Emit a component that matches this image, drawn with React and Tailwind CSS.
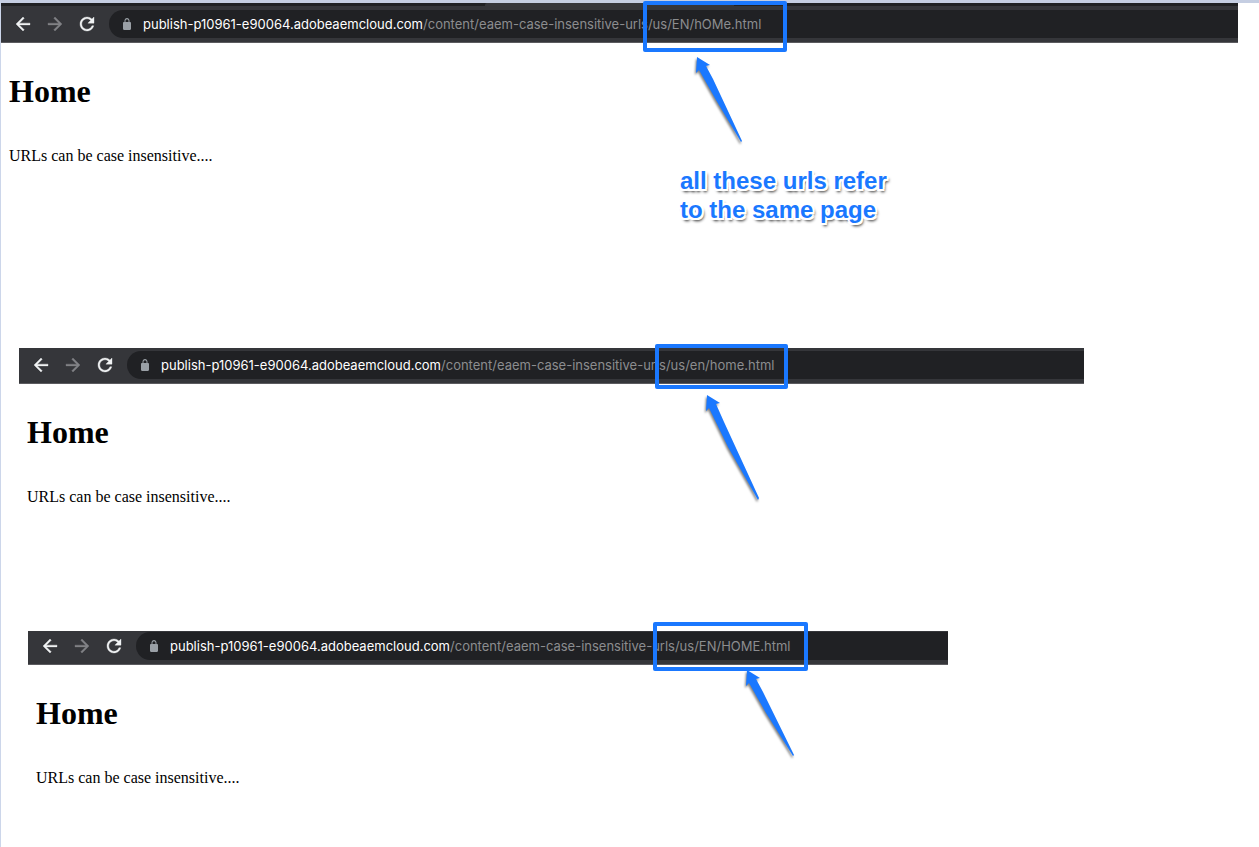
const ARROW_PATH =
  'M20 11H7.83l5.59-5.59L12 4l-8 8 8 8 1.41-1.41L7.83 13H20v-2z';
const RELOAD_PATH =
  'M17.65 6.35C16.2 4.9 14.21 4 12 4c-4.42 0-7.99 3.58-7.99 8s3.57 8 7.99 8c3.73 0 6.84-2.55 7.73-6h-2.08c-.82 2.33-3.04 4-5.65 4-3.31 0-6-2.69-6-6s2.69-6 6-6c1.66 0 3.14.69 4.22 1.78L13 11h7V4l-2.35 2.35z';
const LOCK_PATH =
  'M18 8h-1V6c0-2.76-2.24-5-5-5S7 3.24 7 6v2H6c-1.1 0-2 .9-2 2v10c0 1.1.9 2 2 2h12c1.1 0 2-.9 2-2V10c0-1.1-.9-2-2-2zM9 6c0-1.66 1.34-3 3-3s3 1.34 3 3v2H9V6z';

function NavButton({ label, path, className }) {
  return (
    <button type="button" aria-label={label} className={className}>
      <svg
        viewBox="4 4 16 16"
        className="size-[14px] overflow-visible fill-current stroke-current stroke-[0.4]"
        aria-hidden="true"
      >
        <path d={path} />
      </svg>
    </button>
  );
}

function AddressBar({ id, path, className }) {
  return (
    <div
      className={`flex items-start border-b border-[#5b5b5f] bg-[#35363a] pl-[15px] ${className}`}
    >
      <nav className="flex h-7 items-center gap-[18px] pr-[15px]">
        <NavButton label="Back" path={ARROW_PATH} className="text-[#f1f3f4]" />
        <NavButton label="Forward" path={ARROW_PATH} className="rotate-180 text-[#818286]" />
        <NavButton label="Reload" path={RELOAD_PATH} className="text-[#f1f3f4]" />
      </nav>
      <label
        htmlFor={id}
        className="flex h-7 min-w-0 flex-1 items-center rounded-l-full bg-[#202124] pl-[14px] font-['Inter',sans-serif] text-[13px] leading-5"
      >
        <svg
          viewBox="4 1 16 21"
          className="mr-3 h-3 w-2 shrink-0 fill-[#9aa0a6]"
          preserveAspectRatio="none"
          aria-hidden="true"
        >
          <path d={LOCK_PATH} />
        </svg>
        <span className="text-white">publish-p10961-e90064.adobeaemcloud.com</span>
        <input
          id={id}
          type="text"
          defaultValue={path}
          spellCheck={false}
          className="min-w-0 flex-1 bg-transparent text-[#8c8d8f] outline-none"
        />
      </label>
    </div>
  );
}

function PageContent() {
  return (
    <div className="px-2 pt-[30px] font-['Liberation_Serif',serif] text-black">
      <h1 className="text-[32px] leading-[37px] font-bold">Home</h1>
      <p className="mt-[37px] text-base leading-[18px]">URLs can be case insensitive....</p>
    </div>
  );
}

function Highlight({ className }) {
  return (
    <div
      className={`pointer-events-none absolute rounded-[2px] border-4 border-[#1a78ff] ${className}`}
    />
  );
}

function Pointer({ points, className }) {
  return (
    <svg
      className={`pointer-events-none absolute overflow-visible fill-[#1a78ff] drop-shadow-[-1px_2px_1px_rgba(0,0,0,0.5)] ${className}`}
      aria-hidden="true"
    >
      <polygon points={points} />
    </svg>
  );
}

export default function App() {
  return (
    <main className="min-h-screen border-t-[3px] border-l border-t-[#c5cee2] border-l-[#ccd6ea] bg-white">
      <section className="relative mr-[21px] h-[345px]">
        <div className="flex h-[3px] bg-[#202124]">
          <div className="ml-[484px] w-[249px] rounded-t-[2px] bg-[#35363a]" />
        </div>
        <AddressBar
          id="url-mixed"
          path="/content/eaem-case-insensitive-urls/us/EN/hOMe.html"
          className="pt-1 pb-1"
        />
        <PageContent />
        <Highlight className="-top-[2px] left-[642px] h-[51px] w-36" />
        <Pointer
          className="top-[54px] left-[695px] h-[86px] w-[47px]"
          points="1,0 14,8 10,9 17,22 46,84 45,85 20,43 3,13 0,16"
        />
        <p className="absolute top-[163px] left-[679px] font-['Liberation_Sans',sans-serif] text-2xl leading-[29px] font-bold whitespace-nowrap text-[#1a78ff] [text-shadow:-2px_0_0_#fff,2px_0_0_#fff,0_-2px_0_#fff,0_2px_0_#fff,-2px_-2px_0_#fff,2px_-2px_0_#fff,-2px_2px_0_#fff,2px_2px_0_#fff,2px_3px_3px_rgba(0,0,0,0.9)]">
          all these urls refer
          <br />
          to the same page
        </p>
      </section>

      <section className="relative mr-[175px] ml-[18px] h-[283px]">
        <AddressBar
          id="url-lower"
          path="/content/eaem-case-insensitive-urls/us/en/home.html"
          className="pt-[3px] pb-1"
        />
        <PageContent />
        <Highlight className="-top-1 left-[636px] h-[45px] w-[133px]" />
        <Pointer
          className="top-[47px] left-[687px] h-[105px] w-[54px]"
          points="1,0 14,8 10,9 18,27 53,103 52,105 22,52 3,13 0,16"
        />
      </section>

      <section className="relative mr-[311px] ml-[27px]">
        <AddressBar
          id="url-upper"
          path="/content/eaem-case-insensitive-urls/us/EN/HOME.html"
          className="pt-px pb-1"
        />
        <PageContent />
        <Highlight className="-top-[9px] left-[625px] h-[49px] w-[155px]" />
        <Pointer
          className="top-[39px] left-[718px] h-[86px] w-[49px]"
          points="1,0 14,8 10,9 17,22 48,85 47,86 20,43 3,13 0,16"
        />
      </section>
    </main>
  );
}
